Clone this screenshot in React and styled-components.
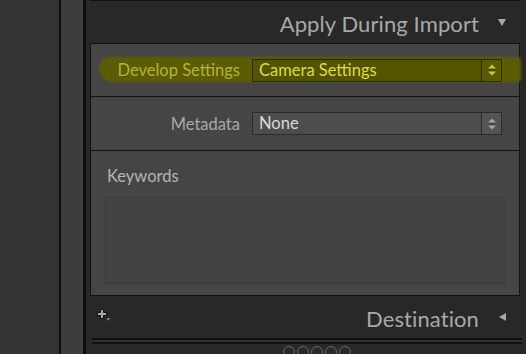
import React from "react"
import styled, { createGlobalStyle } from "styled-components"

const Global = createGlobalStyle`
  html, body {
    margin: 0;
    padding: 0;
    background: #282828;
  }
  body {
    font-family: "Lato", "Open Sans", sans-serif;
  }
`

const Page = styled.div`
  display: flex;
  width: 526px;
  height: 354px;
  overflow: hidden;
  background: #282828;
`

const SidePane = styled.div`
  width: 59px;
  background: #333333;
`

const Rule = styled.div`
  width: ${(p) => p.$w}px;
  background: #0e0e0e;
`

const Strip = styled.div`
  width: 22px;
  background: #3d3d3d;
`

const Main = styled.div`
  flex: 1;
  padding: 0 6px 0 4px;
  display: flex;
  flex-direction: column;
  & > * {
    flex-shrink: 0;
  }
`

const SectionHeader = styled.div`
  height: 42px;
  display: flex;
  align-items: center;
  justify-content: space-between;
  padding: 0 13px 0 6px;
  border-top: ${(p) => (p.$top ? "1px solid #111" : "none")};
  color: #a9a9a9;
  font-size: 22px;
  letter-spacing: 0.1px;
`

const HeaderTitle = styled.span`
  margin-left: auto;
  margin-right: 18px;
  padding-top: 2px;
`

const Panel = styled.div`
  height: 253px;
  box-sizing: border-box;
  border: 1px solid #111;
  background: #454545;
  display: flex;
  flex-direction: column;
`

const Row = styled.div`
  position: relative;
  height: ${(p) => p.$h}px;
  display: flex;
  align-items: center;
  border-bottom: 1px solid #141414;
  padding-right: 17px;
`

const Marker = styled.span`
  position: absolute;
  left: 8px;
  right: -2px;
  top: 13px;
  height: 25px;
  background: #5c5c06;
  border-radius: 12px 4px 4px 16px;
  filter: blur(1.2px);
`

const Label = styled.span`
  position: relative;
  width: 149px;
  text-align: right;
  font-size: 16.5px;
  color: ${(p) => (p.$hl ? "#b4b42c" : "#a8a8a8")};
  margin-right: 12px;
`

const Select = styled.div`
  position: relative;
  flex: 1;
  height: 23px;
  box-sizing: border-box;
  display: flex;
  border: 1px solid ${(p) => (p.$hl ? "#2c2c00" : "#2b2b2b")};
  background: ${(p) => (p.$hl ? "#545400" : "#4d4d4d")};
`

const SelectValue = styled.span`
  flex: 1;
  padding-left: 6px;
  font-size: 16.5px;
  line-height: 21px;
  color: ${(p) => (p.$hl ? "#dcdc3c" : "#dadada")};
`

const Stepper = styled.div`
  width: 19px;
  border-left: 1px solid ${(p) => (p.$hl ? "#2c2c00" : "#2b2b2b")};
  background: ${(p) => (p.$hl ? "#5a5a02" : "#545454")};
  display: flex;
  align-items: center;
  justify-content: center;
`

const KeywordSection = styled.div`
  flex: 1;
  display: flex;
  flex-direction: column;
  padding: 15px 14px 11px 14px;
`

const KeywordLabel = styled.span`
  font-size: 16.5px;
  color: #b4b4b4;
  padding-left: 2px;
  margin-bottom: 11px;
`

const KeywordBox = styled.div`
  flex: 1;
  border: 1px solid #3b3b3b;
  background: #434343;
`

const DoubleRule = styled.div`
  height: 6px;
  box-sizing: border-box;
  border-top: 2px solid #0f0f0f;
  border-bottom: 2px solid #0f0f0f;
  background: #2e2e2e;
  margin-left: 2px;
  margin-right: -2px;
`

const IconRow = styled.div`
  display: flex;
  gap: 2px;
  padding: 2px 0 0 193px;
`

const Ring = styled.span`
  width: 10px;
  height: 10px;
  border-radius: 50%;
  border: 1.5px solid #6a6a6a;
`

const Steps = ({ hl }) => (
  <svg width="12" height="16" viewBox="0 0 12 16">
    <path d="M2 6.5 L6 2.5 L10 6.5 Z" fill={hl ? "#c8c830" : "#a4a4a4"} />
    <path d="M2 8 H10" stroke={hl ? "#3a3a00" : "#3a3a3a"} strokeWidth="1" />
    <path d="M2 9.5 L6 13.5 L10 9.5 Z" fill={hl ? "#c8c830" : "#a4a4a4"} />
  </svg>
)

const Triangle = ({ dir }) => (
  <svg width="10" height="10" viewBox="0 0 10 10">
    {dir === "down" ? (
      <path d="M1 2 L9 2 L5 9 Z" fill="#a9a9a9" />
    ) : (
      <path d="M9 1 L9 9 L2 5 Z" fill="#a9a9a9" />
    )}
  </svg>
)

const PlusIcon = () => (
  <svg width="20" height="18" viewBox="0 0 20 18">
    <path
      d="M4.5 1.5 H7.5 V4.5 H10.5 V7.5 H7.5 V10.5 H4.5 V7.5 H1.5 V4.5 H4.5 Z"
      fill="#a6a6a6"
      stroke="#111"
      strokeWidth="1"
    />
    <path d="M9.5 10 H15 L12.25 13 Z" fill="#8c8c8c" stroke="#111" strokeWidth="0.5" />
  </svg>
)

export default function App() {
  return (
    <Page>
      <Global />
      <SidePane />
      <Rule $w={2} />
      <Strip />
      <Rule $w={3} />
      <Main>
        <SectionHeader $top>
          <HeaderTitle>Apply During Import</HeaderTitle>
          <Triangle dir="down" />
        </SectionHeader>
        <Panel>
          <Row $h={52}>
            <Marker />
            <Label $hl>Develop Settings</Label>
            <Select $hl>
              <SelectValue $hl>Camera Settings</SelectValue>
              <Stepper $hl>
                <Steps hl />
              </Stepper>
            </Select>
          </Row>
          <Row $h={53}>
            <Label>Metadata</Label>
            <Select>
              <SelectValue>None</SelectValue>
              <Stepper>
                <Steps />
              </Stepper>
            </Select>
          </Row>
          <KeywordSection>
            <KeywordLabel>Keywords</KeywordLabel>
            <KeywordBox />
          </KeywordSection>
        </Panel>
        <SectionHeader>
          <PlusIcon />
          <HeaderTitle>Destination</HeaderTitle>
          <Triangle dir="left" />
        </SectionHeader>
        <DoubleRule />
        <IconRow>
          <Ring />
          <Ring />
          <Ring />
          <Ring />
          <Ring />
        </IconRow>
      </Main>
    </Page>
  )
}
